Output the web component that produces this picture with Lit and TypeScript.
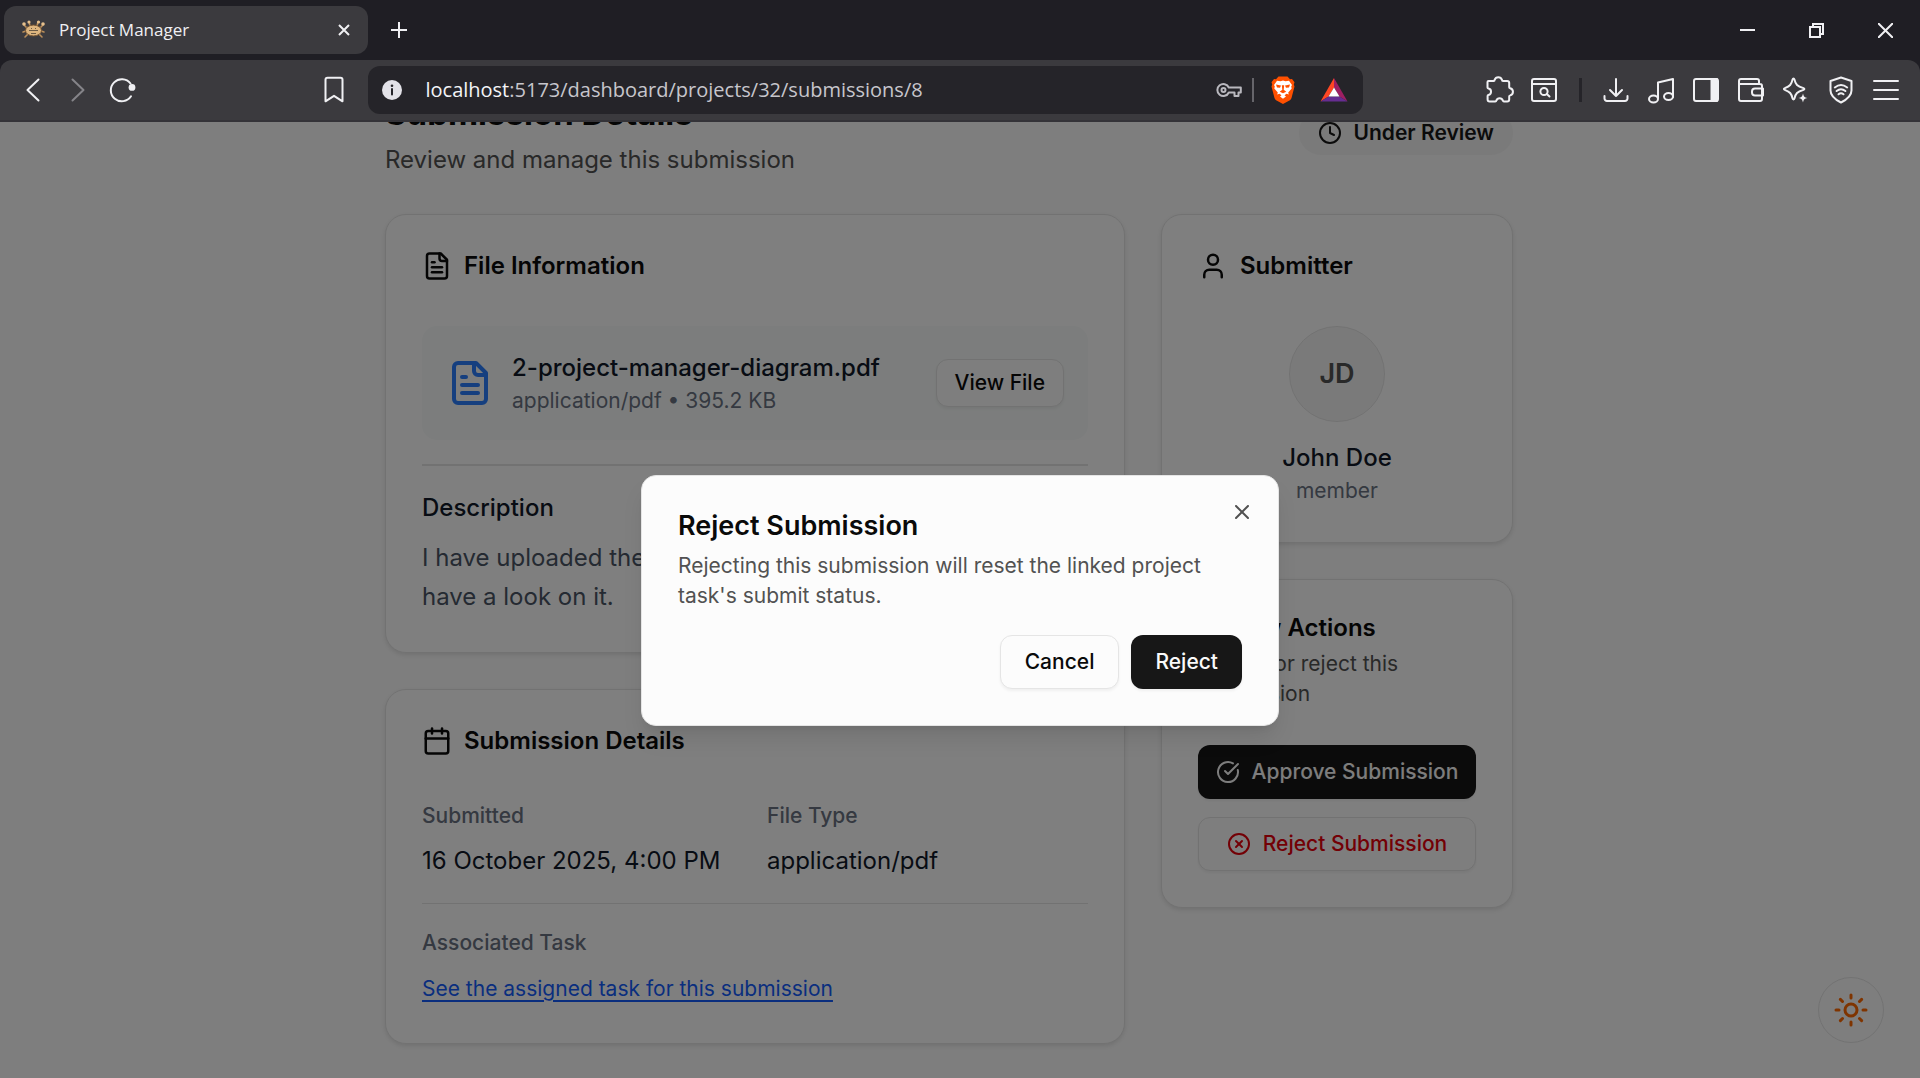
import { LitElement, html, css, svg, nothing, type TemplateResult } from "lit";
import { customElement, property } from "lit/decorators.js";

const glyphs: Record<string, TemplateResult> = {
  file: svg`<path d="M15 2H6a2 2 0 0 0-2 2v16a2 2 0 0 0 2 2h12a2 2 0 0 0 2-2V7Z"/><path d="M14 2v4a2 2 0 0 0 2 2h4"/><path d="M10 9H8"/><path d="M16 13H8"/><path d="M16 17H8"/>`,
  user: svg`<path d="M19 21v-2a4 4 0 0 0-4-4H9a4 4 0 0 0-4 4v2"/><circle cx="12" cy="7" r="4"/>`,
  calendar: svg`<path d="M8 2v4"/><path d="M16 2v4"/><rect width="18" height="18" x="3" y="4" rx="2"/><path d="M3 10h18"/>`,
  clock: svg`<circle cx="12" cy="12" r="10"/><path d="M12 6v6l4 2"/>`,
  check: svg`<path d="M21.801 10A10 10 0 1 1 17 3.335"/><path d="m9 11 3 3L22 4"/>`,
  cancel: svg`<circle cx="12" cy="12" r="10"/><path d="m15 9-6 6"/><path d="m9 9 6 6"/>`,
  close: svg`<path d="M18 6 6 18"/><path d="m6 6 12 12"/>`,
  sun: svg`<circle cx="12" cy="12" r="4"/><path d="M12 2v2M12 20v2M4.93 4.93l1.41 1.41M17.66 17.66l1.41 1.41M2 12h2M20 12h2M6.34 17.66l-1.41 1.41M19.07 4.93l-1.41 1.41"/>`,
};

@customElement("ui-icon")
class UiIcon extends LitElement {
  static styles = css`
    :host { display: inline-flex; flex: none; width: 24px; height: 24px; }
    svg { width: 100%; height: 100%; fill: none; stroke: currentColor; stroke-width: 2; stroke-linecap: round; stroke-linejoin: round; }
  `;
  @property() name = "";
  render() {
    return html`<svg viewBox="0 0 24 24" aria-hidden="true">${glyphs[this.name] ?? nothing}</svg>`;
  }
}

const tool = (body: TemplateResult) =>
  html`<svg class="glyph" viewBox="0 0 30 30" width="30" height="30" aria-hidden="true">${body}</svg>`;

const toolbarIcons = {
  back: tool(svg`<path d="M20.5 4.5 9.500 15l11 10.500"/>`),
  forward: tool(svg`<path d="m9.500 4.500 11 10.500-11 10.500"/>`),
  reload: tool(svg`<path d="M22.500 8.500A11 11 0 1 0 23 21.300"/><circle class="fill" cx="24" cy="12.400" r="3.400"/>`),
  bookmark: tool(svg`<path d="M8.500 2.800h13a2 2 0 0 1 2 2v21.500l-8.500-5.500-8.500 5.500V4.800a2 2 0 0 1 2-2Z"/>`),
  puzzle: tool(svg`<path d="M4.500 6h5.200c.6 0 .9-.5.9-1.100a3.900 3.900 0 0 1 7.400 0c0 .6.4 1.100 1 1.100h4.200a2 2 0 0 1 2 2v4.200c0 .6.400.9.900 1a3.700 3.700 0 0 1 0 7.200c-.6.100-.9.500-.9 1v3.100a2 2 0 0 1-2 2h-3.300c-.6 0-.9-.4-1-.9a3.500 3.500 0 0 0-6.600 0c-.1.600-.4.900-1 .9H5.600a2 2 0 0 1-2-2v-3.600c0-.5.300-.8.800-1a3.200 3.200 0 0 0 0-6.300c-.5-.1-.9-.4-.9-1V7a1 1 0 0 1 1-1Z"/>`),
  pageSearch: tool(svg`<rect x="3" y="4" width="24" height="22" rx="2"/><path d="M3 9h24"/><circle cx="15" cy="16.500" r="3.600"/><path d="m17.800 19 2.700 2.500"/>`),
  download: tool(svg`<path d="M15 4v17M9 15l6 6 6-6M3.500 21v2.500a2.500 2.500 0 0 0 2.500 2.500h18a2.500 2.500 0 0 0 2.500-2.500V21"/>`),
  music: tool(svg`<path d="M12 23V7.500L27 4v18"/><ellipse cx="7.500" cy="24" rx="4.500" ry="3.500"/><ellipse cx="22.500" cy="21.500" rx="4.500" ry="3.500"/>`),
  sidebar: tool(svg`<rect x="3" y="4" width="24" height="22" rx="2"/><path class="solid" d="M20.500 4H26v22h-5.500Z"/>`),
  wallet: tool(svg`<path d="M3 7v17a2 2 0 0 0 2 2h19a2 2 0 0 0 2-2V11a2 2 0 0 0-2-2H4M3 8V6a2 2 0 0 1 2-2h16a2 2 0 0 1 2 2v3M27 13.500h-8a3 3 0 0 0-3 3v1a3 3 0 0 0 3 3h8Z"/>`),
  sparkle: tool(svg`<path d="M12.500 3.500c.7 0 .8.500 1 1.100 1.100 5 2.600 6.500 9 8.500 1.200.4 1.200 1.400 0 1.800-6.400 2-7.900 3.500-9 8.500-.2 1.300-1.800 1.300-2 0-1.100-5-2.600-6.500-7.700-8.500-1.200-.4-1.200-1.400 0-1.800 5.100-2 6.600-3.500 7.700-8.500.2-.6.300-1.100 1-1.100Z"/><path class="fill" d="M22 18.500c.8 3.200 1.300 3.700 4.500 4.500-3.200.8-3.700 1.300-4.500 4.500-.8-3.200-1.300-3.700-4.500-4.500 3.200-.8 3.700-1.300 4.500-4.500Z"/>`),
  shield: tool(svg`<path d="M15 2.500 25.500 6v9.500c0 5-4.500 9-10.500 12-6-3-10.500-7-10.500-12V6Z"/><path d="M8.800 12.500c3.800-3 8.600-3 12.400 0M10.600 16c2.700-2.200 6.100-2.200 8.800 0M12.500 19.300c1.500-1.200 3.500-1.200 5 0"/>`),
  menu: tool(svg`<path d="M3 6h24M3 15h24M3 24h24"/>`),
  key: tool(svg`<path d="M14.800 12.500h12v5h-2.300v3.500h-4v-3.500h-5.700a6 6 0 1 1 0-5Z"/><circle cx="9.500" cy="15" r="2"/>`),
  info: tool(svg`<circle class="fill" cx="15" cy="15" r="10"/><path class="ink" d="M15 14v5.500"/><circle class="inkdot" cx="15" cy="10.800" r="1.300"/>`),
};

@customElement("browser-bar")
class BrowserBar extends LitElement {
  static styles = css`
    :host { display: block; flex: none; background: #1f1e24; color: #f0f0f3; font-family: "Open Sans", "Noto Sans", sans-serif; }
    * { box-sizing: border-box; }
    button { display: flex; align-items: center; justify-content: center; padding: 0; border: 0; background: none; color: inherit; }
    .strip { display: flex; align-items: center; height: 60px; padding-left: 4px; }
    .tab { display: flex; align-items: center; gap: 12px; width: 364px; height: 48px; padding: 0 12px 0 17px; border-radius: 12px; background: #3b3a3e; font-size: 17px; line-height: 24px; }
    .tab-name { flex: 1; }
    .small { width: 24px; height: 24px; }
    .add { width: 62px; height: 48px; }
    .controls { display: flex; margin-left: auto; }
    .controls button { width: 69px; height: 60px; }
    svg { fill: none; stroke: currentColor; }
    .line { stroke-width: 2; }
    .logo { stroke: none; }
    .toolbar { display: grid; grid-template-columns: auto 167fr auto 998fr 114fr auto; align-items: center; height: 62px; padding: 0 11px 0 10px; border-bottom: 2px solid #343338; border-radius: 12px 12px 0 0; background: #3b3a3e; }
    .group { display: flex; align-items: center; }
    .group button { width: 45px; height: 45px; }
    .glyph { flex: none; stroke-width: 2; stroke-linecap: round; stroke-linejoin: round; }
    .solid { fill: currentColor; }
    .fill { fill: currentColor; stroke: none; }
    .ink { stroke: #252429; stroke-width: 2; }
    .inkdot { fill: #252429; stroke: none; }
    .dim { color: #858489; }
    .mark { grid-column: 3; padding-right: 12px; }
    .address { display: flex; align-items: center; height: 48px; padding: 0 4px 0 9px; border-radius: 12px; background: #252429; color: #e3e2e8; }
    .url { flex: 1; margin-left: 18px; font-size: 20px; line-height: 30px; color: #c7c6cc; white-space: nowrap; }
    .host { color: #f4f4f7; }
    .address .key { margin-right: 8px; color: #b9b8be; }
    .bar { width: 2px; height: 24px; margin-right: 3px; background: #66656a; }
    .address .brand { width: 51px; height: 45px; }
    .tools { grid-column: 6; }
    .sep { width: 3px; height: 24px; margin: 0 12px; background: #252429; }
  `;

  render() {
    const t = toolbarIcons;
    return html`
      <div class="strip">
        <div class="tab">
          <svg viewBox="0 0 26 22" width="26" height="22" aria-hidden="true">
            <g stroke="#b98d5a" stroke-width="1.600" stroke-linecap="round">
              <path d="M6 9 3 6M5 12l-3 1M7 15l-3 3M19 9l3-3M20 12l3 1M18 15l3 3M9 7 8 3M16 7l1-4"/>
            </g>
            <ellipse cx="12.500" cy="11.500" rx="8" ry="5.500" fill="#dcb47e" stroke="#70502f"/>
            <path d="M8 11.500h9M10 9l1 1M15 9l-1 1M10 14.500h5" stroke="#6b5a45"/>
            <g fill="#e6c08c" stroke="none"><circle cx="3" cy="5" r="1.800"/><circle cx="22" cy="5" r="1.800"/><circle cx="8" cy="3" r="1.600"/><circle cx="17.500" cy="3" r="1.600"/></g>
          </svg>
          <span class="tab-name">Project Manager</span>
          <button class="small" aria-label="Close tab"><svg class="line" width="12" height="12" viewBox="0 0 12 12"><path d="m1 1 10 10M11 1 1 11"/></svg></button>
        </div>
        <button class="add" aria-label="New tab"><svg class="line" width="16" height="16" viewBox="0 0 16 16"><path d="M8 0v16M0 8h16"/></svg></button>
        <div class="controls">
          <button aria-label="Minimize"><svg class="line" width="15" height="15" viewBox="0 0 15 15"><path d="M0 7h15"/></svg></button>
          <button aria-label="Restore"><svg class="line" width="15" height="15" viewBox="0 0 15 15"><path d="M1 4h10v10H1zM4 4V1h10v10h-3"/></svg></button>
          <button aria-label="Close"><svg class="line" width="15" height="15" viewBox="0 0 15 15"><path d="m0 0 15 15M15 0 0 15"/></svg></button>
        </div>
      </div>
      <div class="toolbar">
        <div class="group">
          <button aria-label="Back">${t.back}</button>
          <button class="dim" aria-label="Forward">${t.forward}</button>
          <button aria-label="Reload">${t.reload}</button>
        </div>
        <div class="group mark"><button aria-label="Bookmark">${t.bookmark}</button></div>
        <div class="address">
          ${t.info}
          <span class="url"><span class="host">localhost</span>:5173/dashboard/projects/32/submissions/8</span>
          <button class="key" aria-label="Passwords">${t.key}</button>
          <span class="bar"></span>
          <button class="brand" aria-label="Shields">
            <svg class="logo" width="24" height="28" viewBox="0 0 24 28">
              <path fill="#ff5000" d="M7.500.500h9L19 3.200l2-.3 2.500 3.300-.7 2.300.7 2-3 11.500c-.3 1-.8 1.600-1.600 2.200L12 28l-6.900-3.800c-.8-.6-1.300-1.200-1.600-2.200L.5 10.500l.7-2L.5 6.200 3 2.900l2 .3Z"/>
              <path fill="#fff" d="m12 4.600 2.500.6 3.500-.5 3 4.300-.8 1.500.5 2-3.500 4 .6 2-2.300-.8-2 1.600 1.500 1.300L12 22.800 9 20.600l1.500-1.300-2-1.600-2.300.8.600-2-3.500-4 .5-2L3 9l3-4.300 3.500.5Z"/>
              <path fill="#ff5000" d="m5 8.600 5 .9-1 2.300-3-.3ZM19 8.600l-5 .9 1 2.300 3-.3ZM10.800 9.200h2.400l-.5 4.600 2.600 1.900-3.300 1.500-3.300-1.500 2.600-1.900Z"/>
            </svg>
          </button>
          <button class="brand" aria-label="Rewards">
            <svg class="logo" width="28" height="24" viewBox="0 0 28 24">
              <path fill="#ff4724" d="M14 0v9.500L8.500 18.500.5 23.500Z"/><path fill="#9e1f63" d="m14 0 13.500 23.500-8-5L14 9.500Z"/><path fill="#662d91" d="m.5 23.500 8-5h11l8 5Z"/><path fill="#fff" d="m14 9.500 5.500 9h-11Z"/>
            </svg>
          </button>
        </div>
        <div class="group tools">
          <button aria-label="Extensions">${t.puzzle}</button>
          <button aria-label="Search page">${t.pageSearch}</button>
          <span class="sep"></span>
          <button aria-label="Downloads">${t.download}</button>
          <button aria-label="Media">${t.music}</button>
          <button aria-label="Sidebar">${t.sidebar}</button>
          <button aria-label="Wallet">${t.wallet}</button>
          <button aria-label="Assistant">${t.sparkle}</button>
          <button aria-label="VPN">${t.shield}</button>
          <button aria-label="Menu">${t.menu}</button>
        </div>
      </div>
    `;
  }
}

@customElement("app-root")
class AppRoot extends LitElement {
  static styles = css`
    :host { display: flex; flex-direction: column; height: 100vh; overflow: hidden; font-family: Inter, sans-serif; font-size: 24px; line-height: 36px; color: #0a0a0a; }
    * { box-sizing: border-box; }
    h1, h2, h3, p, dl, dt, dd { margin: 0; font-weight: inherit; font-size: inherit; }
    button { display: inline-flex; align-items: center; justify-content: center; gap: 12px; font: inherit; color: inherit; cursor: pointer; }
    .page { position: relative; flex: 1; min-height: 0; overflow: hidden; padding-right: 22px; background: #fcfcfc; }
    .content { max-width: 1128px; margin: -34px auto 0; }
    .head { display: flex; align-items: center; justify-content: space-between; margin-bottom: 36px; }
    h1 { padding-top: 2px; margin-bottom: 6px; font-size: 33px; line-height: 46px; font-weight: 700; }
    .muted { color: #525252; }
    .badge { display: flex; align-items: center; gap: 12px; height: 44px; padding: 0 19px; border-radius: 22px; background: #f4f4f4; color: #171717; font-size: 21px; line-height: 30px; font-weight: 600; }
    .grid { display: grid; grid-template-columns: 1fr 1fr 1fr; align-items: start; gap: 36px; }
    .column { display: flex; flex-direction: column; gap: 36px; min-width: 0; }
    .wide { grid-column: span 2; }
    .card { padding: 36px; border: 1px solid #e5e5e5; border-radius: 21px; background: #fff; box-shadow: 0 2px 4px rgba(0, 0, 0, 0.1); }
    .card-title { display: flex; align-items: center; gap: 12px; margin-bottom: 45px; line-height: 30px; font-weight: 600; }
    .card-title ui-icon { width: 30px; height: 30px; }
    .file { display: flex; align-items: center; gap: 18px; margin-bottom: 24px; padding: 24px; border-radius: 15px; background: #f8fbfa; }
    .file ui-icon { width: 48px; height: 48px; color: #2b7fff; }
    .file-text { flex: 1; }
    .strong { font-weight: 500; color: #101828; }
    .small { font-size: 21px; line-height: 30px; }
    .gray { color: #6a7282; }
    .button { height: 54px; padding: 0 24px; border: 1px solid #e5e5e5; border-radius: 12px; background: #fcfcfc; box-shadow: 0 2px 3px rgba(0, 0, 0, 0.05); font-size: 21px; line-height: 30px; font-weight: 500; white-space: nowrap; }
    .compact { height: 48px; padding: 0 18px; }
    .primary { border: 0; background: #171717; color: #fafafa; }
    .danger { color: #e7000b; }
    .description { padding-top: 24px; border-top: 2px solid #e5e5e5; }
    .body { margin-top: 12px; line-height: 39px; color: #4a5565; }
    .facts { display: grid; grid-template-columns: 1fr 1fr; gap: 24px; padding-bottom: 24px; border-bottom: 1px solid #e5e5e5; }
    dt { margin-bottom: 12px; font-weight: 500; }
    dd { color: #101828; }
    .task { padding-top: 24px; }
    .label { margin-bottom: 12px; font-weight: 500; }
    .link { font-size: 21px; color: #155dfc; text-decoration: underline; text-decoration-thickness: 2px; text-underline-offset: 4px; }
    .person { display: flex; flex-direction: column; align-items: center; }
    .avatar { display: flex; align-items: center; justify-content: center; width: 96px; height: 96px; margin-bottom: 18px; border: 1px solid #e5e5e5; border-radius: 50%; background: #f5f5f5; color: #525252; font-size: 27px; font-weight: 600; }
    .actions { display: flex; flex-direction: column; gap: 18px; margin-top: 36px; }
    .actions-title { margin-bottom: 9px; line-height: 24px; font-weight: 600; }
    .theme { position: absolute; right: 36px; bottom: 35px; width: 66px; height: 66px; padding: 0; border: 1px solid #e5e5e5; border-radius: 50%; background: #fcfcfc; color: #ff6900; }
    .theme ui-icon { width: 36px; height: 36px; }
    .overlay { position: absolute; inset: 0; display: flex; align-items: center; justify-content: center; padding-top: 1px; background: rgba(0, 0, 0, 0.5); }
    .dialog { position: relative; width: 638px; padding: 36px; border: 1px solid #e5e5e5; border-radius: 15px; background: #fcfcfc; box-shadow: 0 15px 23px -4px rgba(0, 0, 0, 0.1), 0 6px 9px -6px rgba(0, 0, 0, 0.1); }
    .dialog h2 { margin-bottom: 12px; font-size: 27px; line-height: 27px; font-weight: 600; }
    .footer { display: flex; justify-content: flex-end; gap: 12px; margin-top: 24px; }
    .dismiss { position: absolute; top: 24px; right: 24px; padding: 0; border: 0; background: none; opacity: 0.7; }
  `;

  render() {
    return html`
      <browser-bar></browser-bar>
      <main class="page">
        <div class="content">
          <header class="head">
            <div>
              <h1>Submission Details</h1>
              <p class="muted">Review and manage this submission</p>
            </div>
            <span class="badge"><ui-icon name="clock"></ui-icon>Under Review</span>
          </header>
          <div class="grid">
            <div class="column wide">
              <section class="card">
                <h2 class="card-title"><ui-icon name="file"></ui-icon>File Information</h2>
                <div class="file">
                  <ui-icon name="file"></ui-icon>
                  <div class="file-text">
                    <p class="strong">2-project-manager-diagram.pdf</p>
                    <p class="small gray">application/pdf • 395.2 KB</p>
                  </div>
                  <button class="button compact">View File</button>
                </div>
                <div class="description">
                  <h3 class="strong">Description</h3>
                  <p class="body">I have uploaded the<br />have a look on it.</p>
                </div>
              </section>
              <section class="card">
                <h2 class="card-title"><ui-icon name="calendar"></ui-icon>Submission Details</h2>
                <dl class="facts">
                  <div><dt class="small gray">Submitted</dt><dd>16 October 2025, 4:00 PM</dd></div>
                  <div><dt class="small gray">File Type</dt><dd>application/pdf</dd></div>
                </dl>
                <div class="task">
                  <p class="label small gray">Associated Task</p>
                  <p><a class="link" href="#task">See the assigned task for this submission</a></p>
                </div>
              </section>
            </div>
            <div class="column">
              <section class="card">
                <h2 class="card-title"><ui-icon name="user"></ui-icon>Submitter</h2>
                <div class="person">
                  <span class="avatar">JD</span>
                  <p class="strong">John Doe</p>
                  <p class="small gray">member</p>
                </div>
              </section>
              <section class="card">
                <h2 class="actions-title">Review Actions</h2>
                <p class="small muted">Accept or reject this submission</p>
                <div class="actions">
                  <button class="button primary"><ui-icon name="check"></ui-icon>Approve Submission</button>
                  <button class="button danger"><ui-icon name="cancel"></ui-icon>Reject Submission</button>
                </div>
              </section>
            </div>
          </div>
        </div>
        <button class="theme" aria-label="Toggle theme"><ui-icon name="sun"></ui-icon></button>
        <div class="overlay">
          <div class="dialog" role="dialog" aria-modal="true" aria-labelledby="dialog-title">
            <h2 id="dialog-title">Reject Submission</h2>
            <p class="small muted">Rejecting this submission will reset the linked project task's submit status.</p>
            <div class="footer">
              <button class="button">Cancel</button>
              <button class="button primary">Reject</button>
            </div>
            <button class="dismiss" aria-label="Close"><ui-icon name="close"></ui-icon></button>
          </div>
        </div>
      </main>
    `;
  }
}
